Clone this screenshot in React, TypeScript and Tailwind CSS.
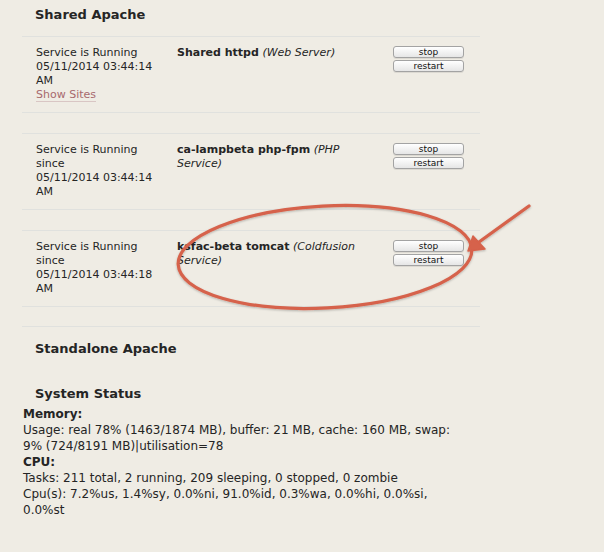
import React from "react";

type Service = {
  status: string;
  started: string;
  name: string;
  kind: string;
  sites?: boolean;
};

const SERVICES: Service[] = [
  { status: "Service is Running", started: "05/11/2014 03:44:14 AM", name: "Shared httpd", kind: "Web Server", sites: true },
  { status: "Service is Running since", started: "05/11/2014 03:44:14 AM", name: "ca-lampbeta php-fpm", kind: "PHP Service" },
  { status: "Service is Running since", started: "05/11/2014 03:44:18 AM", name: "ksfac-beta tomcat", kind: "Coldfusion Service" },
];

function ActionButton({ label }: { label: string }) {
  return (
    <button className="w-[71px] h-[12px] rounded-[3px] border border-[#a3a3a3] bg-gradient-to-b from-white to-[#e6e6e6] text-[9px] leading-[10px] text-[#111] shadow-[0_1px_0_rgba(0,0,0,0.08)]">
      {label}
    </button>
  );
}

function ServiceRow({ service }: { service: Service }) {
  return (
    <div className="grid grid-cols-[141px_215px_102px] border-y border-[#e0e1de] pt-[9px] pb-[10px] text-[11px] leading-[14px]">
      <div className="pl-[14px] pr-[8px]">
        <div>{service.status}</div>
        <div>{service.started}</div>
        {service.sites && (
          <a className="text-[#a7696d] border-b border-[#d9c6c4] cursor-pointer">Show Sites</a>
        )}
      </div>
      <div className="pl-[14px] pr-[12px]">
        <span className="font-bold">{service.name}</span>{" "}
        <span className="italic">({service.kind})</span>
      </div>
      <div className="pl-[15px] flex flex-col gap-[2px]">
        <ActionButton label="stop" />
        <ActionButton label="restart" />
      </div>
    </div>
  );
}

export default function App() {
  return (
    <div className="relative w-[604px] h-[552px] overflow-hidden bg-[#efece4] text-[#252525] font-['DejaVu_Sans',Verdana,sans-serif]">
      <h2 className="pt-[7px] pl-[35px] text-[13px] leading-[16px] font-bold">Shared Apache</h2>

      <div className="ml-[22px] w-[458px] mt-[13px] flex flex-col gap-[20px]">
        {SERVICES.map((s) => (
          <ServiceRow key={s.name} service={s} />
        ))}
      </div>
      <div className="ml-[22px] w-[458px] mt-[19px] border-t border-[#e0e1de]" />

      <h2 className="mt-[14px] pl-[35px] text-[13px] leading-[16px] font-bold">Standalone Apache</h2>
      <h2 className="mt-[29px] pl-[35px] text-[13px] leading-[16px] font-bold">System Status</h2>

      <div className="mt-[4px] pl-[23px] w-[465px] text-[12px] leading-[16px]">
        <div className="font-bold">Memory:</div>
        <div>Usage: real 78% (1463/1874 MB), buffer: 21 MB, cache: 160 MB, swap: 9% (724/8191 MB)|utilisation=78</div>
        <div className="font-bold">CPU:</div>
        <div>Tasks: 211 total, 2 running, 209 sleeping, 0 stopped, 0 zombie</div>
        <div>Cpu(s): 7.2%us, 1.4%sy, 0.0%ni, 91.0%id, 0.3%wa, 0.0%hi, 0.0%si, 0.0%st</div>
      </div>

      {/* hand-drawn annotation over the tomcat row */}
      <svg className="absolute left-0 top-0 pointer-events-none" width="604" height="552">
        <defs>
          <filter id="ink" x="-10%" y="-10%" width="120%" height="130%">
            <feDropShadow dx="0" dy="1" stdDeviation="0.8" floodColor="#000" floodOpacity="0.25" />
          </filter>
        </defs>
        <g filter="url(#ink)" stroke="#d6624b" fill="none" strokeLinecap="round">
          <ellipse cx="325" cy="257" rx="147" ry="51" transform="rotate(-3 325 257)" strokeWidth="3.2" />
          <line x1="529" y1="206" x2="479" y2="242" strokeWidth="3.2" />
          <polygon points="468,251 473,236 485,249" fill="#d6624b" strokeWidth="1.5" strokeLinejoin="round" />
        </g>
      </svg>
    </div>
  );
}
